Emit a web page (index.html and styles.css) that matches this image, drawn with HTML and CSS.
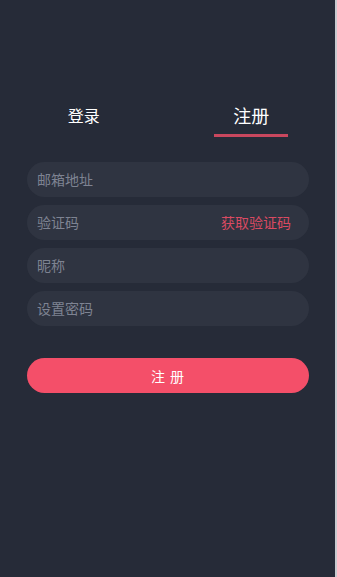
FILE: index.html
```html
<!DOCTYPE html>
<html lang="zh-CN">
<head>
    <meta charset="UTF-8">
    <meta name="viewport" content="width=device-width, initial-scale=1.0">
    <title>注册</title>
    <link rel="stylesheet" href="styles.css">
</head>
<body>
    <div class="page">
        <div class="tabs">
            <div class="tab">登录</div>
            <div class="tab active">注册</div>
        </div>
        <form class="form">
            <div class="field"><input type="text" placeholder="邮箱地址"></div>
            <div class="field">
                <input type="text" placeholder="验证码">
                <span class="get-code">获取验证码</span>
            </div>
            <div class="field"><input type="text" placeholder="昵称"></div>
            <div class="field"><input type="password" placeholder="设置密码"></div>
            <button type="button" class="submit">注 册</button>
        </form>
    </div>
</body>
</html>
```

FILE: styles.css
```css
body, html {
    margin: 0;
    padding: 0;
    height: 100%;
    background-color: #262b38;
    overflow: hidden;
}
.page {
    width: 335px;
    height: 577px;
    border-right: 2px solid #c9cbd0;
    background-color: #262b38;
    font-family: "Noto Sans CJK SC", "Noto Sans", sans-serif;
    box-sizing: content-box;
}
.tabs {
    display: flex;
    padding-top: 100px;
}
.tab {
    flex: 1;
    display: flex;
    flex-direction: column;
    align-items: center;
    color: #ffffff;
    font-size: 16px;
    line-height: 30px;
}
.tab::after {
    content: "";
    display: block;
    width: 74px;
    height: 3px;
    margin-top: 4px;
    background-color: transparent;
}
.tab.active {
    font-size: 18px;
}
.tab.active::after {
    background-color: #c9475e;
}
.form {
    display: flex;
    flex-direction: column;
    gap: 8px;
    padding: 25px 26px 0 27px;
}
.field {
    display: flex;
    align-items: center;
    height: 35px;
    padding: 0 18px 2px 10px;
    box-sizing: border-box;
    border-radius: 18px;
    background-color: #2f3441;
}
.field input {
    flex: 1;
    min-width: 0;
    border: none;
    outline: none;
    background: transparent;
    color: #ffffff;
    font-family: inherit;
    font-size: 14px;
    padding: 0;
}
.field input::placeholder {
    color: #7e8392;
}
.get-code {
    color: #d94a62;
    font-size: 14px;
}
.submit {
    margin-top: 24px;
    height: 35px;
    border: none;
    border-radius: 18px;
    background-color: #f44f69;
    color: #ffffff;
    font-family: inherit;
    font-size: 14px;
    letter-spacing: 1px;
}
```
